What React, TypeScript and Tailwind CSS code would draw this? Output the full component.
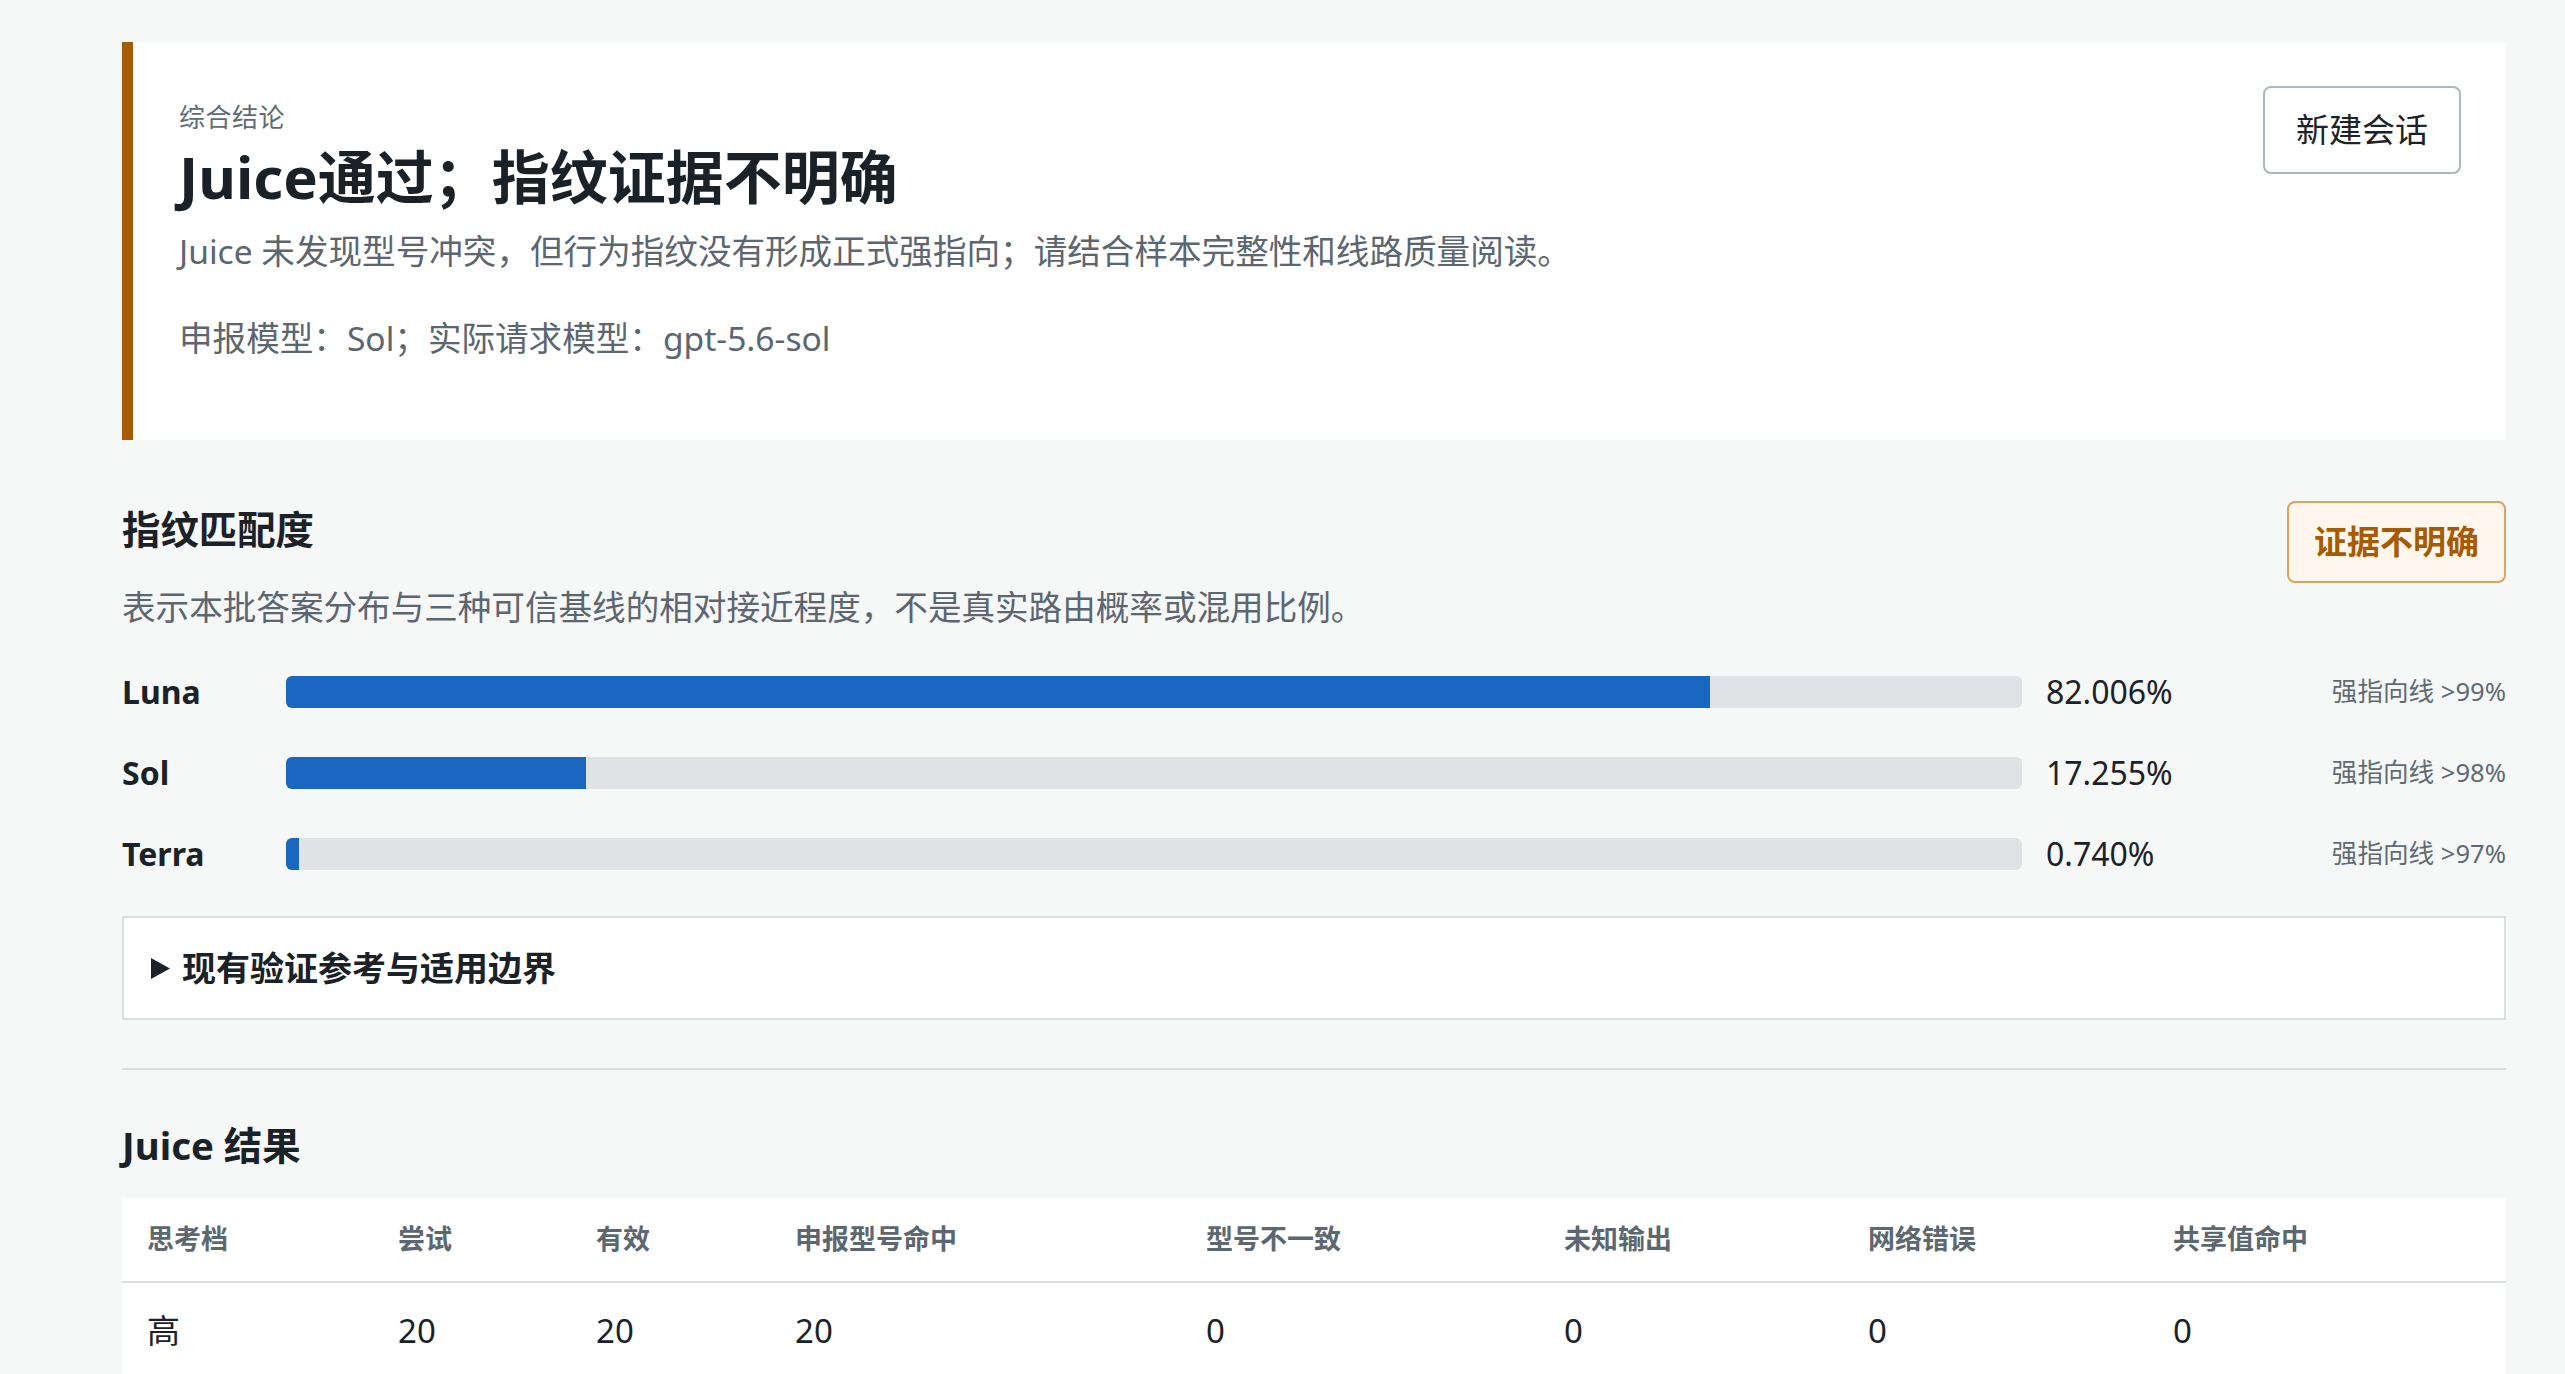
import React from 'react';

const font = { fontFamily: '"Noto Sans", "Noto Sans CJK SC", sans-serif' };

const rows = [
  { name: 'Luna', pct: 82.006, note: '强指向线 >99%' },
  { name: 'Sol', pct: 17.255, note: '强指向线 >98%' },
  { name: 'Terra', pct: 0.74, note: '强指向线 >97%' },
];

const cols = [
  { label: '思考档', w: 'w-[251px]' },
  { label: '尝试', w: 'w-[198px]' },
  { label: '有效', w: 'w-[199px]' },
  { label: '申报型号命中', w: 'w-[411px]' },
  { label: '型号不一致', w: 'w-[358px]' },
  { label: '未知输出', w: 'w-[304px]' },
  { label: '网络错误', w: 'w-[305px]' },
  { label: '共享值命中', w: '' },
];

const values = ['高', '20', '20', '20', '0', '0', '0', '0'];

// Summary card at the top
const Verdict = () => (
  <div className="flex items-start justify-between border-l-[11px] border-[#a65b02] bg-white pl-[46px] pr-[45px] pt-[44px] pb-[77px]">
    <div>
      <div className="mt-[12px] text-[26px] leading-[39px] tracking-[0.5px] text-[#5f6b73]">综合结论</div>
      <h1 className="mt-[4px] text-[58px] font-bold leading-[72px] text-[#1b2227]">Juice通过；指纹证据不明确</h1>
      <p className="mt-[13px] text-[33.6px] leading-[50px] text-[#5b6670]">
        Juice 未发现型号冲突，但行为指纹没有形成正式强指向；请结合样本完整性和线路质量阅读。
      </p>
      <p className="mt-[37px] text-[33.6px] leading-[50px] text-[#5b6670]">申报模型：Sol；实际请求模型：gpt-5.6-sol</p>
    </div>
    <button className="h-[88px] rounded-[8px] border-2 border-[#aeb7bd] bg-white px-[31px] text-[33px] text-[#1c2327]">
      新建会话
    </button>
  </div>
);

const MatchBars = () => (
  <div className="mt-[36px] flex flex-col gap-[33px]">
    {rows.map(r => (
      <div key={r.name} className="flex h-[48px] items-center">
        <div className="w-[164px] text-[32px] font-bold text-[#1b2227]">{r.name}</div>
        <div className="h-[32px] flex-1 overflow-hidden rounded-[6px] bg-[#dfe3e6]">
          <div className="h-full bg-[#1a67c1]" style={{ width: `${r.pct}%` }} />
        </div>
        <div className="w-[309px] pl-[24px] text-[32px] text-[#1b2227]">{r.pct.toFixed(3)}%</div>
        <div className="w-[175px] whitespace-nowrap text-right text-[25.6px] text-[#5f6b73]">{r.note}</div>
      </div>
    ))}
  </div>
);

export default function App() {
  return (
    <div style={font} className="min-h-screen bg-[#f6f7f7] pl-[122px] pr-[59px] pt-[42px] pb-[40px]">
      <Verdict />

      {/* Fingerprint match */}
      <div className="mt-[61px] flex items-start justify-between">
        <div>
          <h2 className="mt-[3px] text-[38.4px] font-bold leading-[50px] text-[#1b2227]">指纹匹配度</h2>
          <p className="mt-[28px] text-[33.6px] leading-[50px] text-[#5b6670]">
            表示本批答案分布与三种可信基线的相对接近程度，不是真实路由概率或混用比例。
          </p>
        </div>
        <div className="flex h-[82px] items-center rounded-[8px] border-2 border-[#dca35f] bg-[#fff7ed] px-[25px] text-[33px] font-bold text-[#a65b00]">
          证据不明确
        </div>
      </div>

      <MatchBars />

      <div className="mt-[38px] flex h-[104px] items-center gap-[12px] border-2 border-[#d9dee2] bg-white pl-[27px]">
        <svg width="19" height="21" viewBox="0 0 19 21">
          <path d="M0 0 L19 10.5 L0 21 Z" fill="#1b2227" />
        </svg>
        <span className="text-[34px] font-bold text-[#1b2227]">现有验证参考与适用边界</span>
      </div>

      <div className="mt-[48px] h-[2px] bg-[#d9dee2]" />

      {/* Juice results */}
      <h2 className="mt-[50px] text-[38.4px] font-bold leading-[50px] text-[#1b2227]">Juice 结果</h2>
      <table className="mt-[28px] w-full table-fixed border-collapse bg-white">
        <thead>
          <tr className="border-b-2 border-[#d9dee2]">
            {cols.map(c => (
              <th key={c.label} className={`${c.w} h-[84px] pl-[25px] text-left text-[27px] font-bold text-[#5c6770]`}>
                {c.label}
              </th>
            ))}
          </tr>
        </thead>
        <tbody>
          <tr>
            {values.map((v, i) => (
              <td key={i} className="pl-[25px] pt-[23px] pb-[23px] text-[33px] leading-[50px] text-[#1b2227]">
                {v}
              </td>
            ))}
          </tr>
        </tbody>
      </table>
    </div>
  );
}
